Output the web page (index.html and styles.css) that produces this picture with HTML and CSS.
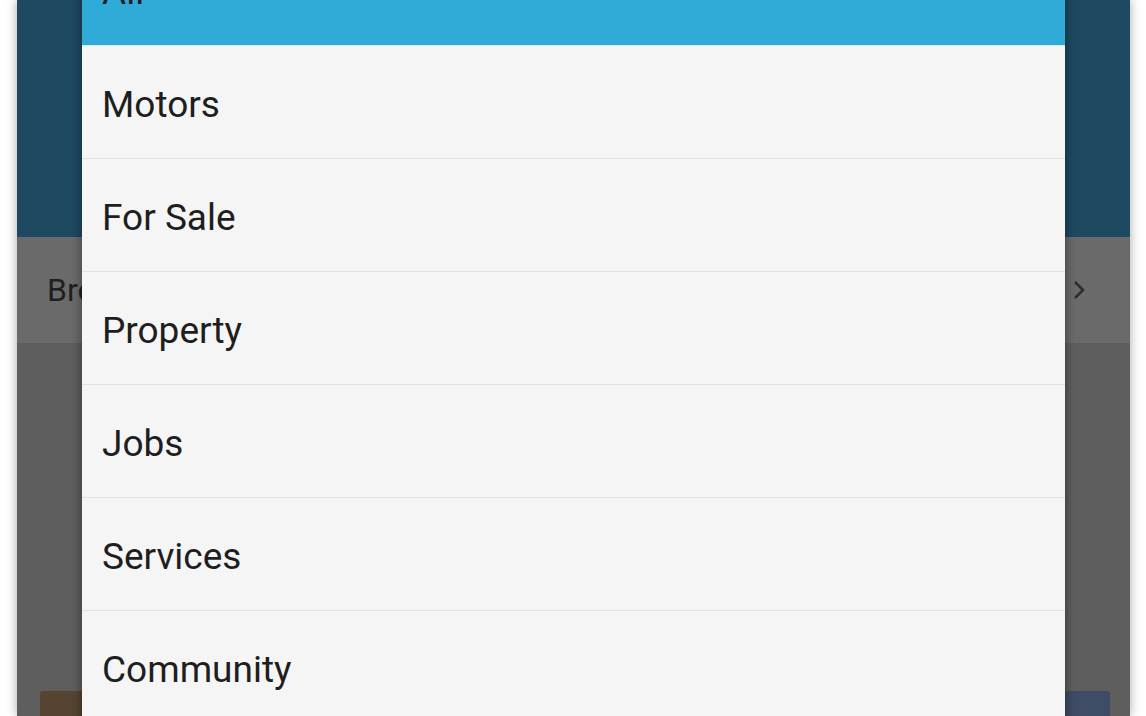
FILE: index.html
```html
<!DOCTYPE html>
<html lang="en">
<head>
    <meta charset="UTF-8">
    <meta name="viewport" content="width=device-width, initial-scale=1.0">
    <title>Categories</title>
    <link rel="stylesheet" href="styles.css">
</head>
<body>
    <div class="screen">
        <div class="appbar"></div>
        <div class="crumb">
            <span class="crumb-title">Browse</span>
            <svg class="chevron" width="14" height="22" viewBox="0 0 14 22">
                <polyline points="3,3 11,11 3,19" fill="none" stroke="#2e2e2e" stroke-width="2.6"/>
            </svg>
        </div>
        <div class="content">
            <div class="thumb thumb-brown"></div>
            <div class="thumb thumb-blue"></div>
        </div>

        <ul class="dialog">
            <li class="item selected">All</li>
            <li class="item">Motors</li>
            <li class="item">For Sale</li>
            <li class="item">Property</li>
            <li class="item">Jobs</li>
            <li class="item">Services</li>
            <li class="item">Community</li>
        </ul>
    </div>
</body>
</html>
```

FILE: styles.css
```css
body {
    margin: 0;
    padding: 0;
    background-color: #fff;
    font-family: Roboto, "Noto Sans", Arial, sans-serif;
    overflow: hidden;
}

.screen {
    position: relative;
    margin-left: 17px;
    width: 1113px;
    height: 716px;
    display: flex;
    flex-direction: column;
    overflow: hidden;
    box-shadow: 0 0 10px rgba(0, 0, 0, 0.35);
}

.appbar {
    height: 237px;
    background-color: #1d4961;
    flex: 0 0 auto;
}

.crumb {
    height: 106px;
    flex: 0 0 auto;
    background-color: #6a6a6a;
    display: flex;
    align-items: center;
    justify-content: space-between;
    padding: 0 44px 0 30px;
}

.crumb-title {
    font-size: 32px;
    color: #1f1f1f;
}

.content {
    flex: 1;
    background-color: #5e5e5e;
    display: flex;
    justify-content: space-between;
    padding: 348px 20px 0 23px;
}

.thumb {
    height: 40px;
    border-radius: 2px;
}

.thumb-brown {
    width: 120px;
    background-color: #564431;
}

.thumb-blue {
    width: 120px;
    background-color: #3f4c65;
}

.dialog {
    position: absolute;
    top: -67px;
    left: 65px;
    width: 983px;
    margin: 0;
    padding: 0;
    list-style: none;
    background-color: #f5f5f5;
    box-shadow: 0 0 10px rgba(0, 0, 0, 0.45);
}

.item {
    height: 112px;
    line-height: 118px;
    padding-left: 20px;
    font-size: 37px;
    color: #1e1e1e;
    border-bottom: 1px solid #e1e1e1;
}

.item.selected {
    background-color: #30aad6;
    border-bottom-color: #cfe9f3;
}
```
